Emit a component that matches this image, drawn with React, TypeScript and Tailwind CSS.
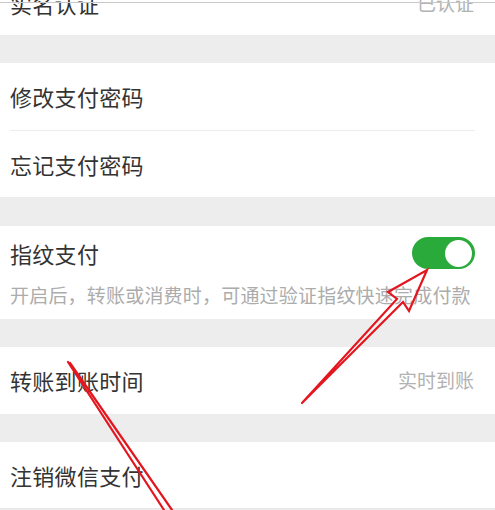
import React from "react";

const font = { fontFamily: '"Noto Sans CJK SC", "Noto Sans", sans-serif' };

function Row({ label, value, className = "" }: { label: string; value?: string; className?: string }) {
  return (
    <div className={`flex items-center justify-between pl-[10px] pr-[21px] ${className}`}>
      <span className="text-[22px] tracking-[0.3px] text-[#333333]">{label}</span>
      {value && <span className="text-[19px] text-[#b2b2b2]">{value}</span>}
    </div>
  );
}

function Gap({ h }: { h: string }) {
  return <div className={`bg-[#ededed] ${h}`} />;
}

function Toggle() {
  return (
    <div className="flex h-[32px] w-[63px] items-center justify-end rounded-full bg-[#29aa3a] pr-[3px]">
      <div className="h-[27px] w-[27px] rounded-full bg-white" />
    </div>
  );
}

export default function App() {
  return (
    <div className="relative h-[510px] w-[495px] overflow-hidden bg-[#ededed]" style={font}>
      {/* clipped row at top */}
      <div className="h-[35px] overflow-hidden bg-white">
        <Row label="实名认证" value="已认证" className="-mt-[22px] h-[50px]" />
      </div>
      <Gap h="h-[28px]" />

      <div className="bg-white">
        <Row label="修改支付密码" className="h-[67px]" />
        <div className="ml-[10px] mr-[20px] h-px bg-[#ececec]" />
        <Row label="忘记支付密码" className="h-[66px]" />
      </div>
      <Gap h="h-[29px]" />

      <div className="bg-white">
        <div className="flex h-[54px] items-center justify-between pl-[10px] pr-[20px]">
          <span className="text-[22px] tracking-[0.3px] text-[#333333]">指纹支付</span>
          <Toggle />
        </div>
        <div className="pb-[9px] pl-[10px] text-[19px] leading-[30px] tracking-[0.2px] text-[#acacac]">
          开启后，转账或消费时，可通过验证指纹快速完成付款
        </div>
      </div>
      <Gap h="h-[28px]" />

      <div className="bg-white">
        <Row label="转账到账时间" value="实时到账" className="h-[67px]" />
      </div>
      <Gap h="h-[28px]" />

      <div className="border-b border-[#e6e6e6] bg-white">
        <Row label="注销微信支付" className="h-[66px]" />
      </div>

      {/* header edge */}
      <div className="absolute left-0 right-0 top-[2px] h-px bg-[#c8c8c8]" />

      {/* red annotation arrows */}
      <svg className="pointer-events-none absolute left-0 top-0" width="495" height="510" viewBox="0 0 495 510">
        <g fill="none" stroke="#e3161f" strokeWidth="2.2" strokeLinejoin="miter" strokeLinecap="round">
          <polyline points="302,403 397,299 388,292 427,270 409,311 403,302 302,403" />
          <line x1="68" y1="362" x2="164" y2="510" />
          <line x1="70" y1="363" x2="172" y2="510" />
        </g>
      </svg>
    </div>
  );
}
